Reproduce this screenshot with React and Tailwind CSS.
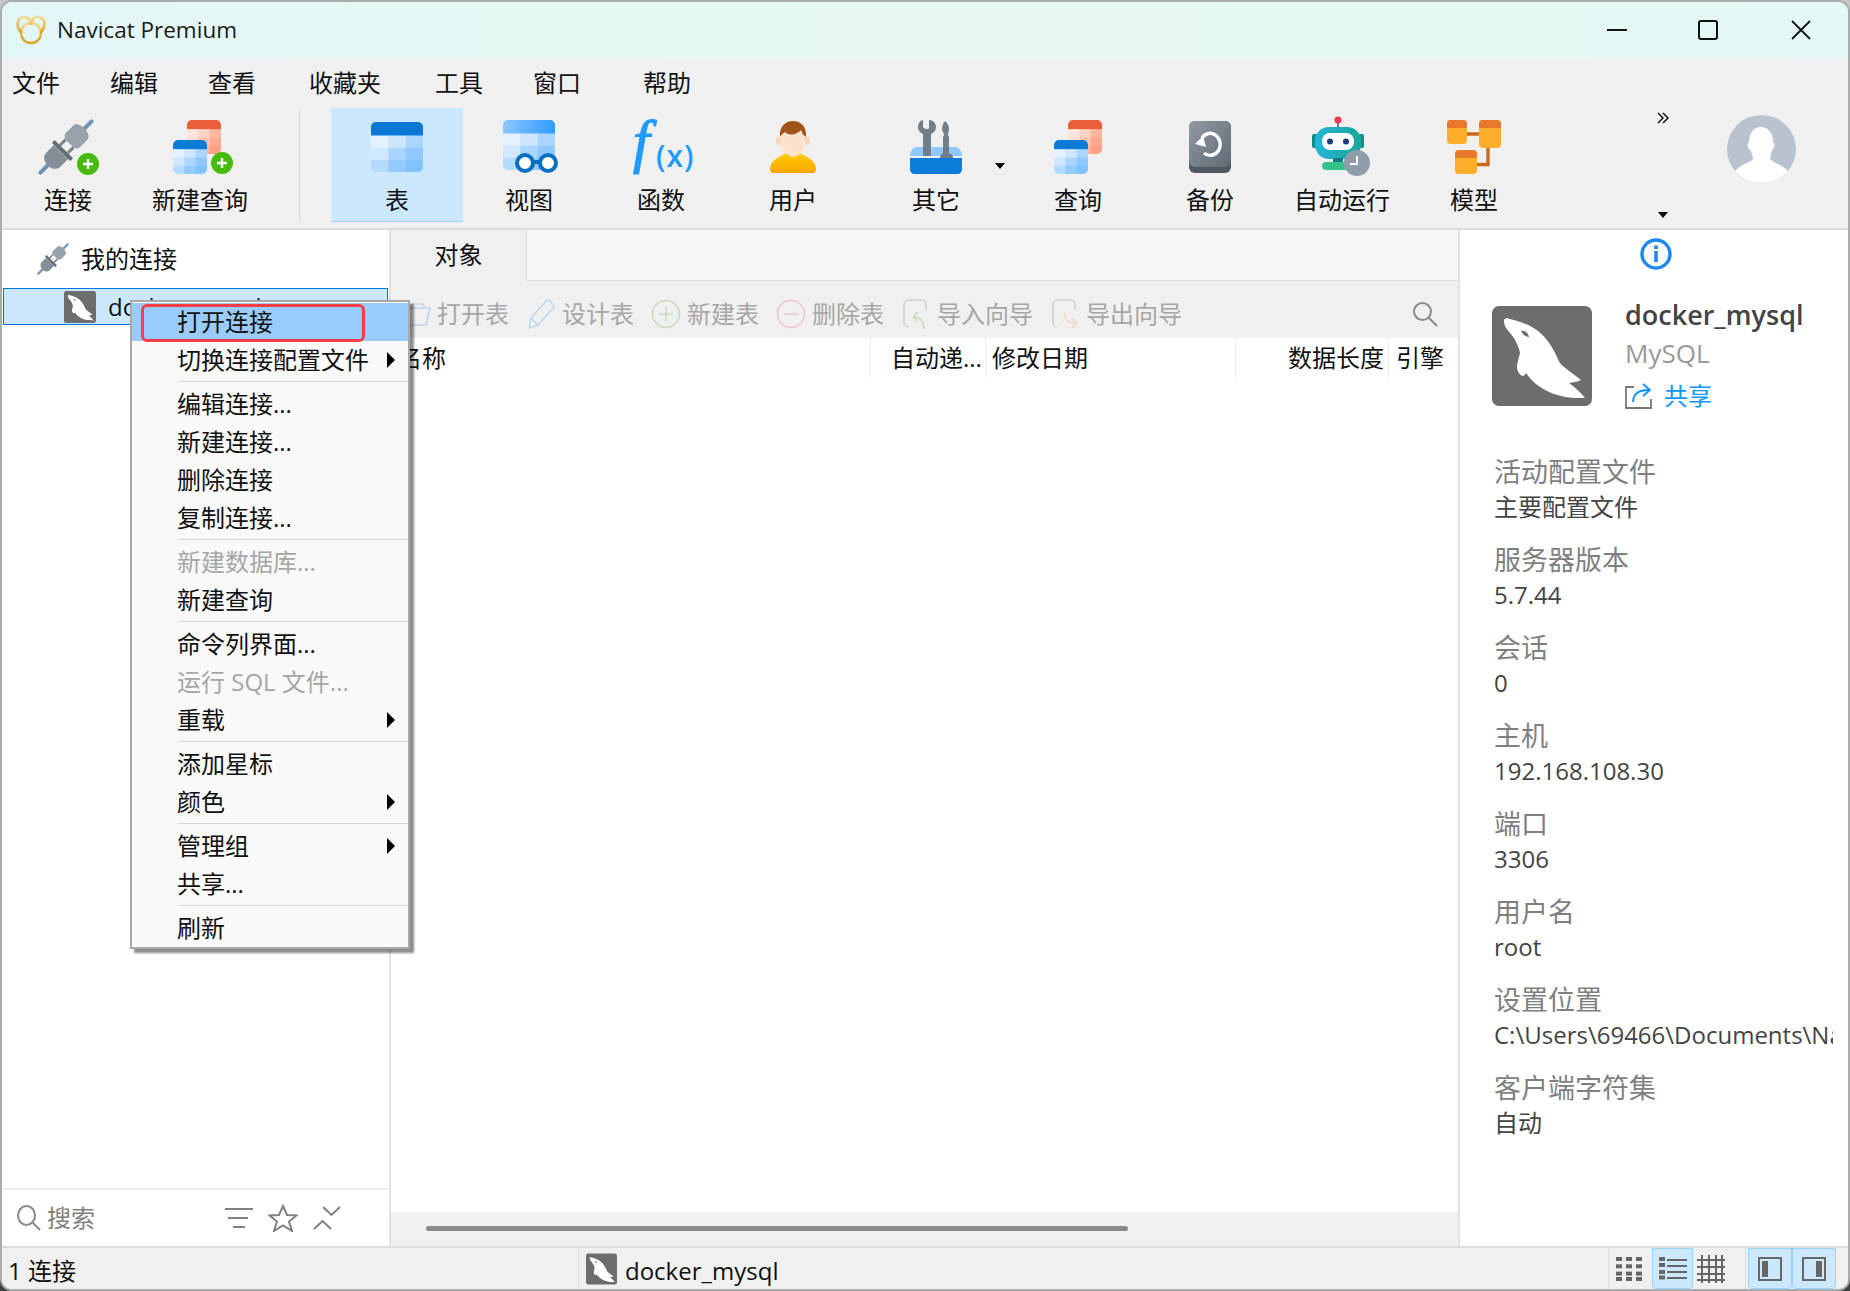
import React from "react";

const menus = [
  ["文件", "ml-[10px]"],
  ["编辑", "ml-[50px]"],
  ["查看", "ml-[50px]"],
  ["收藏夹", "ml-[53px]"],
  ["工具", "ml-[54px]"],
  ["窗口", "ml-[50px]"],
  ["帮助", "ml-[62px]"],
];

const contextItems = [
  { t: "打开连接", active: true },
  { t: "切换连接配置文件", arrow: true },
  { sep: true },
  { t: "编辑连接..." },
  { t: "新建连接..." },
  { t: "删除连接" },
  { t: "复制连接..." },
  { sep: true },
  { t: "新建数据库...", off: true },
  { t: "新建查询" },
  { sep: true },
  { t: "命令列界面..." },
  { t: "运行 SQL 文件...", off: true },
  { t: "重载", arrow: true },
  { sep: true },
  { t: "添加星标" },
  { t: "颜色", arrow: true },
  { sep: true },
  { t: "管理组", arrow: true },
  { t: "共享..." },
  { sep: true },
  { t: "刷新" },
];

const info = [
  ["活动配置文件", "主要配置文件"],
  ["服务器版本", "5.7.44"],
  ["会话", "0"],
  ["主机", "192.168.108.30"],
  ["端口", "3306"],
  ["用户名", "root"],
  ["设置位置", "C:\\Users\\69466\\Documents\\Navicat\\MySQL\\Servers"],
  ["客户端字符集", "自动"],
];

function Dolphin({ className }) {
  return (
    <svg viewBox="0 0 100 100" className={className}>
      <rect width="100" height="100" rx="7" fill="#6d6d6d" />
      <path
        d="M12 14C13 12 15 12 18 13C27 15 38 19 46 25C55 32 61 42 65 51C67 56 69 59 72 61C77 65 84 70 89 74C85 76 81 76 77 77C83 81 89 87 93 92C85 92 79 92 73 91C65 89 58 87 53 84C46 80 41 76 37 71L34 67C33 69 32 70 30 70C27 68 25 65 25 61C25 56 27 52 28 47C27 41 24 36 22 32C19 28 15 24 13 20C12 18 12 16 12 14Z"
        fill="#fff"
      />
      <path d="M29 25C32 24 36 26 37 31C34 31 31 29 29 25Z" fill="#6d6d6d" />
    </svg>
  );
}

function Plug({ className }) {
  return (
    <svg viewBox="0 0 56 56" className={className}>
      <g transform="rotate(45 28 28)">
        <rect x="26" y="-10" width="4" height="14" rx="1.5" fill="#6f93b5" />
        <path d="M18 8C18 4 22 2 28 2S38 4 38 8V18C38 22 34 23 32 23H24C22 23 18 22 18 18Z" fill="#98a2aa" />
        <rect x="21" y="23" width="3" height="8" fill="#7b858e" />
        <rect x="32" y="23" width="3" height="8" fill="#7b858e" />
        <rect x="15" y="31" width="26" height="4" rx="1" fill="#636d76" />
        <path d="M18 35H38V46C38 51 33 54 28 54S18 51 18 46Z" fill="#858f98" />
        <rect x="26" y="53" width="4" height="13" rx="1.5" fill="#6f93b5" />
      </g>
    </svg>
  );
}

function PlusBadge({ cx, cy }) {
  return (
    <g>
      <circle cx={cx} cy={cy} r="11" fill="#46bb0b" />
      <path d={`M${cx - 5} ${cy}H${cx + 5}M${cx} ${cy - 5}V${cy + 5}`} stroke="#fff" strokeWidth="2.4" />
    </g>
  );
}

// small table: header band plus 3x3 tinted cells
function Sheet({ x, y, w, h, head, cells, id }) {
  const hh = h * 0.27;
  const cw = w / 3;
  const ch = (h - hh) / 3;
  return (
    <g>
      <clipPath id={id}>
        <rect x={x} y={y} width={w} height={h} rx="5" />
      </clipPath>
      <g clipPath={`url(#${id})`}>
        <rect x={x} y={y} width={w} height={hh + 1} fill={head} />
        {cells.map((c, i) => (
          <rect key={i} x={x + (i % 3) * cw} y={y + hh + Math.floor(i / 3) * ch} width={cw + 0.5} height={ch + 0.5} fill={c} />
        ))}
      </g>
    </g>
  );
}

const blueCells = ["#e4f1ff", "#cfe6ff", "#a9d5ff", "#d2e8ff", "#a9d5ff", "#8fc9ff", "#b5dcff", "#94ccff", "#80c3ff"];
const redCells = ["#ffe6dc", "#ffd3c4", "#ffb8a0", "#ffdccf", "#ffc4b0", "#ffa98e", "#ffc8b6", "#ffb39b", "#ffa085"];

function QueryIcon({ id, plus }) {
  if (plus) {
    return (
      <svg viewBox="0 0 62 54" className="ml-[7px] h-[54px] w-[62px]">
        <Sheet id={`${id}b`} x={14} y={0} w={34} h={34} head="#ea5f3a" cells={redCells} />
        <Sheet id={`${id}f`} x={0} y={20} w={34} h={34} head="#0b7bd6" cells={blueCells} />
        <PlusBadge cx={49} cy={43} />
      </svg>
    );
  }
  return (
    <svg viewBox="0 0 48 54" className="h-[54px] w-[48px]">
      <Sheet id={`${id}b`} x={14} y={0} w={34} h={34} head="#ea5f3a" cells={redCells} />
      <Sheet id={`${id}f`} x={0} y={20} w={34} h={34} head="#0b7bd6" cells={blueCells} />
    </svg>
  );
}

function TableIcon() {
  return (
    <svg viewBox="0 0 52 50" className="h-[50px] w-[52px]">
      <Sheet id="tbl" x={0} y={0} w={52} h={50} head="#0a78d4" cells={blueCells} />
    </svg>
  );
}

function ViewIcon() {
  return (
    <svg viewBox="0 0 56 54" className="ml-[4px] h-[54px] w-[56px]">
      <defs>
        <linearGradient id="viewHead" x1="0" x2="1">
          <stop offset="0" stopColor="#8cc6fb" />
          <stop offset="1" stopColor="#2f9bff" />
        </linearGradient>
      </defs>
      <Sheet id="vw" x={0} y={0} w={52} h={50} head="url(#viewHead)" cells={blueCells} />
      <circle cx="22" cy="43" r="8" fill="#fff" stroke="#0b6fc2" strokeWidth="4" />
      <circle cx="45" cy="43" r="8" fill="#fff" stroke="#0b6fc2" strokeWidth="4" />
      <path d="M30 42H37" stroke="#0b6fc2" strokeWidth="4" />
    </svg>
  );
}

function FxIcon() {
  return (
    <svg viewBox="0 0 66 52" className="h-[52px] w-[66px] overflow-visible">
      <text x="5" y="40" fontFamily="Liberation Serif" fontStyle="italic" fontSize="60" fill="#1e9bff" stroke="#1e9bff" strokeWidth="1.2">f</text>
      <text x="28" y="46" fontFamily="Open Sans" fontWeight="600" fontSize="30" letterSpacing="1" fill="#1e9bff">(x)</text>
    </svg>
  );
}

function UserIcon() {
  return (
    <svg viewBox="0 0 46 52" className="h-[52px] w-[46px]">
      <defs>
        <linearGradient id="shirt" x1="0" x2="0" y1="0" y2="1">
          <stop offset="0" stopColor="#ffcf00" />
          <stop offset="1" stopColor="#f8a600" />
        </linearGradient>
      </defs>
      <path d="M0 48C0 40 8 36 17 32H29C38 36 46 40 46 48C46 50 45 52 43 52H3C1 52 0 50 0 48Z" fill="url(#shirt)" />
      <path d="M17 26H29V33C27 37 19 37 17 33Z" fill="#f7d3b8" />
      <ellipse cx="8.5" cy="20" rx="2.5" ry="4" fill="#f7d3b8" />
      <ellipse cx="37.5" cy="20" rx="2.5" ry="4" fill="#f7d3b8" />
      <ellipse cx="23" cy="18" rx="13" ry="17" fill="#fee1ca" />
      <path d="M10 16C9 6 15 0 23 0S37 6 36 16C33 14 32 12 31 9C27 14 18 15 15 11C13 12 11 14 10 16Z" fill="#a1541a" />
    </svg>
  );
}

function ToolsIcon() {
  return (
    <svg viewBox="0 0 52 54" className="h-[54px] w-[52px]">
      <path d="M0 36C0 31 3 27 7 27H45C49 27 52 31 52 36Z" fill="#8ecaff" />
      <path d="M0 0C5 0 7 4 7 7C7 11 4 13 2 14V36H-6V14C-8 13 -11 11 -11 7C-11 4 -9 0 -6 0V6C-6 8 -5 9 -2 9S0 8 0 6Z" transform="translate(19 0)" fill="#717e8a" />
      <path d="M35 0C38 2 39 5 39 9L38 13C38 15 39 15 39 17V32C42 33 43 35 43 37H30C30 35 31 33 33 32V17C33 15 34 15 34 13L32 9C32 5 33 2 35 0Z" transform="translate(0 1)" fill="#717e8a" />
      <path d="M0 38H52V49C52 52 50 54 47 54H5C2 54 0 52 0 49Z" fill="#0a7bd8" />
    </svg>
  );
}

function BackupIcon() {
  return (
    <svg viewBox="0 0 42 52" className="h-[52px] w-[42px]">
      <defs>
        <linearGradient id="bk" x1="0" x2="1" y1="0" y2="1">
          <stop offset="0" stopColor="#929aa2" />
          <stop offset="1" stopColor="#5f6a74" />
        </linearGradient>
      </defs>
      <rect width="42" height="52" rx="6" fill="#4f5860" />
      <rect width="42" height="46" rx="6" fill="url(#bk)" />
      <path d="M13 17A10 11 0 1 1 15 32" fill="none" stroke="#fff" strokeWidth="3.4" />
      <path d="M6 23L14 15L17 26Z" fill="#fff" />
    </svg>
  );
}

function RobotIcon() {
  return (
    <svg viewBox="0 0 60 62" className="h-[62px] w-[60px]">
      <defs>
        <linearGradient id="bot" x1="0" x2="1">
          <stop offset="0" stopColor="#25b4d6" />
          <stop offset="1" stopColor="#18a89b" />
        </linearGradient>
      </defs>
      <circle cx="26" cy="4" r="3.6" fill="#ee3b52" />
      <rect x="25" y="7" width="2" height="5" fill="#6b7a88" />
      <rect x="0" y="18" width="6" height="14" rx="2" fill="#0c8f8a" />
      <rect x="46" y="18" width="6" height="14" rx="2" fill="#0c8f8a" />
      <rect x="3" y="11" width="46" height="32" rx="14" fill="url(#bot)" />
      <rect x="10" y="17" width="32" height="17" rx="8" fill="#fff" />
      <circle cx="18" cy="25.5" r="3" fill="#1c3d7a" />
      <circle cx="34" cy="25.5" r="3" fill="#1c3d7a" />
      <rect x="21" y="42" width="10" height="6" fill="#0c7b8a" />
      <rect x="10" y="46" width="34" height="8" rx="4" fill="#34c48a" />
      <circle cx="45" cy="47" r="13" fill="#8f9ca9" />
      <path d="M45 40V48H38" fill="none" stroke="#fff" strokeWidth="1.8" />
    </svg>
  );
}

function ModelBlock({ x, y, w, h }) {
  return (
    <g>
      <rect x={x} y={y} width={w} height={h} rx="4" fill="#ffae2c" />
      <path d={`M${x} ${y + 8}V${y + 4}Q${x} ${y} ${x + 4} ${y}H${x + w - 4}Q${x + w} ${y} ${x + w} ${y + 4}V${y + 8}Z`} fill="#e8782a" />
    </g>
  );
}

function ModelIcon() {
  return (
    <svg viewBox="0 0 54 54" className="h-[54px] w-[54px]">
      <path d="M20 14H32M41 28V44.5H30" fill="none" stroke="#c8691c" strokeWidth="3.4" />
      <ModelBlock x={0} y={0} w={20} h={24} />
      <ModelBlock x={32} y={0} w={22} h={28} />
      <ModelBlock x={8} y={30} w={22} h={24} />
    </svg>
  );
}

function Avatar() {
  return (
    <svg viewBox="0 0 69 68" className="h-[68px] w-[69px]">
      <clipPath id="av">
        <ellipse cx="34.5" cy="34" rx="34.5" ry="34" />
      </clipPath>
      <g clipPath="url(#av)">
        <rect width="69" height="68" fill="#b9c2cf" />
        <path d="M34 12C42 12 46 19 46 27C48 29 48 33 45 35C44 39 43 42 43 44C46 48 58 50 62 58V70H7V58C11 50 23 48 26 44C26 42 25 39 23 35C20 33 20 29 22 27C22 19 26 12 34 12Z" fill="#fff" />
      </g>
    </svg>
  );
}

function ToolButton({ label, children, active }) {
  return (
    <div className={`flex h-[114px] w-[132px] flex-col items-center shrink-0 ${active ? "bg-[#cce8ff] border-b border-[#99d1ff]" : ""}`}>
      <div className="relative flex h-[78px] w-[132px] items-center justify-center">{children}</div>
      <div className="flex h-[28px] w-[132px] items-center justify-center text-[24px] leading-none text-[#111]">{label}</div>
    </div>
  );
}

function Caret({ className }) {
  return (
    <svg viewBox="0 0 10 6" className={className}>
      <path d="M0 0H10L5 6Z" fill="#000" />
    </svg>
  );
}

function FaintIcon({ children }) {
  return (
    <svg viewBox="0 0 30 30" className="h-[30px] w-[30px] shrink-0" fill="none" strokeWidth="1.6">
      {children}
    </svg>
  );
}

function ObjectTools() {
  const items = [
    ["打开表", <path key="a" d="M10 9V7C10 6 11 5 12 5H20C22 5 23 6 23 7V9M8 9H29L25 26H9C8 26 7 25 7 24V10Z" stroke="#bcd4ea" />],
    ["设计表", <g key="b"><path d="M3 29L5 19L20 2C21 1 23 1 24 2L27 5C28 6 28 8 27 9L12 26Z" stroke="#bcd8f0" /><path d="M5 19L12 26" stroke="#bcd8f0" /></g>],
    ["新建表", <g key="c"><circle cx="15" cy="15" r="13.5" stroke="#c4dcb8" /><path d="M8 15H22M15 8V22" stroke="#c4dcb8" /></g>],
    ["删除表", <g key="d"><circle cx="15" cy="15" r="13.5" stroke="#ecc8c4" /><path d="M8 15H22" stroke="#ecc8c4" /></g>],
    ["导入向导", <g key="e"><path d="M3 24V6C3 3 5 1 8 1H20C23 1 25 3 25 6V10M3 24C3 26 5 28 7 28" stroke="#d0d0d0" /><path d="M23 30C23 22 20 18 12 18M12 18L17 13M12 18L17 23" stroke="#c4dcb8" /></g>],
    ["导出向导", <g key="f"><path d="M3 24V6C3 3 5 1 8 1H20C23 1 25 3 25 6V10M3 24C3 26 5 28 7 28" stroke="#d0d0d0" /><path d="M14 13C14 20 17 24 27 24M27 24L22 19M27 24L22 29" stroke="#f0d8b8" /></g>],
  ];
  return (
    <div className="flex h-[57px] items-center gap-[17px] bg-[#f0f0f0] pl-[10px] pr-[20px] pt-[8px] shrink-0">
      {items.map(([label, icon]) => (
        <div key={label} className="flex items-center gap-[6px]">
          <FaintIcon>{icon}</FaintIcon>
          <span className="text-[24px] leading-none text-[#a6a6a6]">{label}</span>
        </div>
      ))}
      <svg viewBox="0 0 26 26" className="ml-auto h-[26px] w-[26px]" fill="none" stroke="#8a8a8a" strokeWidth="2">
        <circle cx="10.5" cy="10.5" r="8.5" />
        <path d="M16.5 16.5L25 25" />
      </svg>
    </div>
  );
}

function ContextMenu() {
  return (
    <div className="absolute left-[130px] top-[300px] w-[280px] border-2 border-[#a9a9a9] bg-[#f9f9f9] pt-px shadow-[4px_4px_2px_rgba(0,0,0,0.45)] text-[24px] leading-none">
      {contextItems.map((item, i) =>
        item.sep ? (
          <div key={i} className="flex h-[6px] items-start pt-[2px] pl-[46px]">
            <div className="h-[1px] w-full bg-[#d7d7d7]" />
          </div>
        ) : (
          <div
            key={i}
            className={`flex h-[38px] items-center pl-[45px] pr-[13px] ${item.active ? "bg-[#99ccfa]" : ""} ${
              item.off ? "text-[#a6a6a6]" : "text-[#111]"
            }`}
          >
            <span className="flex-1">{item.t}</span>
            {item.arrow && (
              <svg viewBox="0 0 8 16" className="h-[16px] w-[8px]">
                <path d="M0 0L8 8L0 16Z" fill="#000" />
              </svg>
            )}
          </div>
        )
      )}
      <div className="absolute left-[9px] top-[2px] h-[38px] w-[224px] rounded-[6px] border-[3px] border-[#f43f48]" />
    </div>
  );
}

function GridDots() {
  const rows = [0, 7.3, 14.6, 20];
  return (
    <svg viewBox="0 0 26 24" className="h-[24px] w-[26px]" fill="#666">
      {rows.map((y) => [0, 10, 20].map((x) => <rect key={`${x}-${y}`} x={x} y={y} width="6" height="4" />))}
    </svg>
  );
}

function ListLines() {
  return (
    <svg viewBox="0 0 28 24" className="h-[24px] w-[28px]" fill="#666">
      {[0, 6, 13, 18.5].map((y) => <rect key={y} x="0" y={y} width="6" height="4" />)}
      {[2, 8, 14, 20].map((y) => <rect key={y} x="8" y={y} width="20" height="2" />)}
    </svg>
  );
}

function GridLines() {
  return (
    <svg viewBox="0 0 28 28" className="h-[28px] w-[28px]" stroke="#666" strokeWidth="2">
      {[5, 12, 19, 25].map((p) => <path key={p} d={`M${p} 0V28`} />)}
      {[5, 12, 19, 25].map((p) => <path key={`h${p}`} d={`M0 ${p}H28`} />)}
    </svg>
  );
}

function PaneIcon({ right }) {
  return (
    <svg viewBox="0 0 24 24" className="h-[24px] w-[24px]">
      <rect x="1" y="1" width="22" height="22" fill="none" stroke="#666" strokeWidth="2" />
      <rect x={right ? 14 : 4} y="4" width="6" height="16" fill="#666" />
    </svg>
  );
}

export default function App() {
  return (
    <div className="relative h-[1291px] w-[1850px] overflow-hidden bg-[linear-gradient(180deg,#c4c8c6,#6d736f_60%,#3c423f)] font-['Open_Sans','Noto_Sans_CJK_SC',sans-serif]">
      <div className="flex h-full w-full flex-col overflow-hidden rounded-[12px] border-2 border-[#a9adab] bg-white">
        {/* title bar */}
        <div className="flex h-[56px] items-center bg-[linear-gradient(90deg,#e3f6f7,#e7f8f0_55%,#e3f7f6)] shrink-0">
          <svg viewBox="0 0 30 30" className="ml-[14px] h-[30px] w-[30px]" fill="none">
            <defs>
              <linearGradient id="gold" x1="0" x2="0" y1="0" y2="1">
                <stop offset="0" stopColor="#f3dc95" />
                <stop offset="1" stopColor="#d9a21f" />
              </linearGradient>
            </defs>
            <g stroke="url(#gold)" strokeWidth="2.6">
              <circle cx="15" cy="18" r="10" />
              <path d="M6 18C0 12 0 4 7 2C12 1 15 6 15 10" />
              <path d="M24 18C30 12 30 4 23 2C18 1 15 6 15 10" />
            </g>
          </svg>
          <span className="ml-[11px] text-[22.5px] leading-none text-[#1a1a1a]">Navicat Premium</span>
          <div className="ml-auto flex items-center text-black">
            <svg viewBox="0 0 20 2" className="h-[2px] w-[20px]"><rect width="20" height="2" fill="#111" /></svg>
            <svg viewBox="0 0 20 20" className="ml-[71px] h-[20px] w-[20px]" fill="none"><rect x="1" y="1" width="18" height="18" rx="2" stroke="#111" strokeWidth="2" /></svg>
            <svg viewBox="0 0 20 20" className="ml-[73px] mr-[37px] h-[20px] w-[20px]" fill="none"><path d="M1 1L19 19M19 1L1 19" stroke="#111" strokeWidth="1.8" /></svg>
          </div>
        </div>

        {/* menu bar */}
        <div className="flex h-[50px] items-center bg-[#f0f0f0] text-[24px] leading-none text-[#111] shrink-0">
          {menus.map(([m, cls]) => (
            <span key={m} className={cls}>{m}</span>
          ))}
        </div>

        {/* main toolbar */}
        <div className="flex h-[122px] items-start border-b-2 border-[#dcdcdc] bg-[#f0f0f0] shrink-0">
          <ToolButton label="连接">
            <div className="relative h-[56px] w-[60px]">
              <Plug className="h-[56px] w-[56px]" />
              <svg viewBox="0 0 24 24" className="absolute bottom-[-1px] right-[-2px] h-[24px] w-[24px]"><PlusBadge cx={12} cy={12} /></svg>
            </div>
          </ToolButton>
          <ToolButton label="新建查询"><QueryIcon id="q1" plus /></ToolButton>
          <div className="ml-[33px] mr-[31px] mt-[2px] h-[112px] w-px bg-[#d9d9d9]" />
          <ToolButton label="表" active><TableIcon /></ToolButton>
          <ToolButton label="视图"><ViewIcon /></ToolButton>
          <ToolButton label="函数"><FxIcon /></ToolButton>
          <ToolButton label="用户"><UserIcon /></ToolButton>
          <div className="relative flex w-[153px] shrink-0 justify-start">
            <div className="ml-[11px]"><ToolButton label="其它"><ToolsIcon /></ToolButton></div>
            <Caret className="absolute left-[136px] top-[55px] h-[6px] w-[10px]" />
          </div>
          <ToolButton label="查询"><QueryIcon id="q2" /></ToolButton>
          <ToolButton label="备份"><BackupIcon /></ToolButton>
          <ToolButton label="自动运行"><RobotIcon /></ToolButton>
          <ToolButton label="模型"><ModelIcon /></ToolButton>
          <div className="ml-[113px] flex h-[114px] w-[20px] flex-col items-center justify-between pb-[4px] pt-[4px] shrink-0">
            <svg viewBox="0 0 12 12" className="h-[12px] w-[12px]" fill="none" stroke="#000" strokeWidth="1.4">
              <path d="M1 1L6 6L1 11M6 1L11 6L6 11" />
            </svg>
            <Caret className="h-[6px] w-[10px]" />
          </div>
          <div className="ml-[54px] mt-[7px] shrink-0"><Avatar /></div>
        </div>

        {/* body */}
        <div className="flex min-h-0 flex-1">
          {/* connections tree */}
          <div className="flex w-[389px] flex-col border-r-2 border-[#e2e2e2] shrink-0">
            <div className="flex h-[58px] items-center pl-[35px]">
              <Plug className="h-[32px] w-[32px]" />
              <span className="ml-[12px] text-[24px] leading-none text-[#111]">我的连接</span>
            </div>
            <div className="flex h-[37px] items-center border border-[#0078d7] bg-[#cce8ff] pl-[60px] ml-px mr-[1px]">
              <Dolphin className="h-[32px] w-[32px]" />
              <span className="ml-[12px] text-[24px] leading-none text-[#111]">docker_mysql</span>
            </div>
            <div className="flex-1" />
            <div className="mx-px h-[2px] bg-[#eeeeee]" />
            <div className="flex h-[56px] items-center pl-[15px] shrink-0">
              <svg viewBox="0 0 24 26" className="h-[26px] w-[24px]" fill="none" stroke="#8a8a8a" strokeWidth="2">
                <ellipse cx="9.5" cy="10.5" rx="8.5" ry="9.5" />
                <path d="M15 17L23 25" />
              </svg>
              <span className="ml-[6px] w-[178px] text-[24px] leading-none text-[#808080]">搜索</span>
              <svg viewBox="0 0 28 20" className="h-[20px] w-[28px]" fill="#808080">
                <rect width="28" height="2" />
                <rect x="3" y="9" width="20" height="2" />
                <rect x="8" y="18" width="12" height="2" />
              </svg>
              <svg viewBox="0 0 30 28" className="ml-[15px] h-[28px] w-[30px]" fill="none" stroke="#808080" strokeWidth="2">
                <path d="M15 2L19 11L28.5 11.5L21 17.5L24 27L15 21.5L6 27L9 17.5L1.5 11.5L11 11Z" />
              </svg>
              <svg viewBox="0 0 28 24" className="ml-[15px] h-[24px] w-[28px]" fill="none" stroke="#808080" strokeWidth="2">
                <path d="M10 1L18.5 9L27 1M1 23L9.5 15L18 23" />
              </svg>
            </div>
          </div>

          {/* objects */}
          <div className="flex min-w-0 flex-1 flex-col">
            <div className="flex h-[51px] shrink-0">
              <div className="flex w-[135px] items-center justify-center bg-[#f0f0f0] pb-px text-[24px] leading-none text-[#111]">对象</div>
              <div className="flex-1 border-b border-l border-[#dcdcdc] bg-[#f7f7f7]" />
            </div>
            <ObjectTools />
            <div className="flex h-[40px] text-[24px] leading-none text-[#111] shrink-0">
              <div className="flex w-[480px] items-center border-r border-[#ececec] pl-[7px]">名称</div>
              <div className="flex w-[115px] items-center whitespace-nowrap border-r border-[#ececec] pl-[20px]">自动递...</div>
              <div className="flex w-[250px] items-center border-r border-[#ececec] pl-[6px]">修改日期</div>
              <div className="flex w-[153px] items-center justify-end border-r border-[#ececec] pr-[4px]">数据长度</div>
              <div className="flex flex-1 items-center pl-[7px]">引擎</div>
            </div>
            <div className="flex-1" />
            <div className="flex h-[34px] items-center bg-[#f0f0f0] pb-px pl-[35px] shrink-0">
              <div className="h-[5px] w-[702px] rounded-full bg-[#8a8a8a]" />
            </div>
          </div>

          {/* info pane */}
          <div className="flex w-[390px] flex-col overflow-hidden border-l-2 border-[#e2e2e2] pl-[34px] pr-[15px] shrink-0">
            <svg viewBox="0 0 32 32" className="ml-[146px] mt-[8px] h-[32px] w-[32px] shrink-0">
              <circle cx="16" cy="16" r="14" fill="none" stroke="#1e87f0" strokeWidth="3.4" />
              <rect x="14.2" y="13" width="3.6" height="11" fill="#1e87f0" />
              <rect x="14.2" y="7.5" width="3.6" height="3.6" fill="#1e87f0" />
            </svg>
            <div className="-ml-[2px] mt-[36px] flex shrink-0">
              <Dolphin className="h-[100px] w-[100px]" />
              <div className="ml-[33px] -mt-[2px] flex flex-col">
                <div className="text-[27px] font-semibold leading-[22px] text-[#444]">docker_mysql</div>
                <div className="mt-[16px] text-[26px] leading-[22px] text-[#999]">MySQL</div>
                <div className="mt-[18px] flex items-center">
                  <svg viewBox="0 0 28 27" className="h-[27px] w-[28px]" fill="none" strokeWidth="1.8">
                    <path d="M9 5H1V26H26V17" stroke="#777" />
                    <path d="M8 20C8 12 13 8 24 8M18 2L25 8L18 14" stroke="#0a95ff" />
                  </svg>
                  <span className="ml-[11px] text-[24px] leading-none text-[#0a95ff]">共享</span>
                </div>
              </div>
            </div>
            <div className="mt-[44px] flex flex-col gap-[17px] overflow-hidden">
              {info.map(([label, value]) => (
                <div key={label}>
                  <div className="flex h-[36px] items-center text-[27px] leading-none text-[#7f7f7f]">{label}</div>
                  <div className="flex h-[35px] items-center whitespace-nowrap text-[24px] leading-none text-[#444]">{value}</div>
                </div>
              ))}
            </div>
          </div>
        </div>

        {/* status bar */}
        <div className="flex h-[43px] items-center border-t-2 border-[#dcdcdc] bg-[#f0f0f0] text-[24px] leading-none text-[#111] shrink-0">
          <div className="w-[576px] pl-[6px] pt-[5px]">1 连接</div>
          <div className="flex h-full items-center border-l border-[#dcdcdc] pl-[7px]">
            <Dolphin className="h-[32px] w-[31px]" />
            <span className="ml-[8px] pt-[4px]">docker_mysql</span>
          </div>
          <div className="ml-auto flex h-full items-center border-l border-[#dcdcdc] pl-[7px] mr-[12px]">
            <GridDots />
            <div className="ml-[10px] flex h-full w-[41px] items-center justify-center rounded-b-[4px] border border-[#99d1ff] bg-[#cce8ff]"><ListLines /></div>
            <div className="ml-[4px]"><GridLines /></div>
            <div className="ml-[20px] h-full w-px bg-[#dcdcdc]" />
            <div className="ml-[2px] flex h-full w-[44px] items-center justify-center rounded-b-[4px] border border-[#99d1ff] bg-[#cce8ff]"><PaneIcon /></div>
            <div className="flex h-full w-[44px] items-center justify-center rounded-b-[4px] border border-[#99d1ff] bg-[#cce8ff]"><PaneIcon right /></div>
          </div>
        </div>
      </div>

      <ContextMenu />
    </div>
  );
}
